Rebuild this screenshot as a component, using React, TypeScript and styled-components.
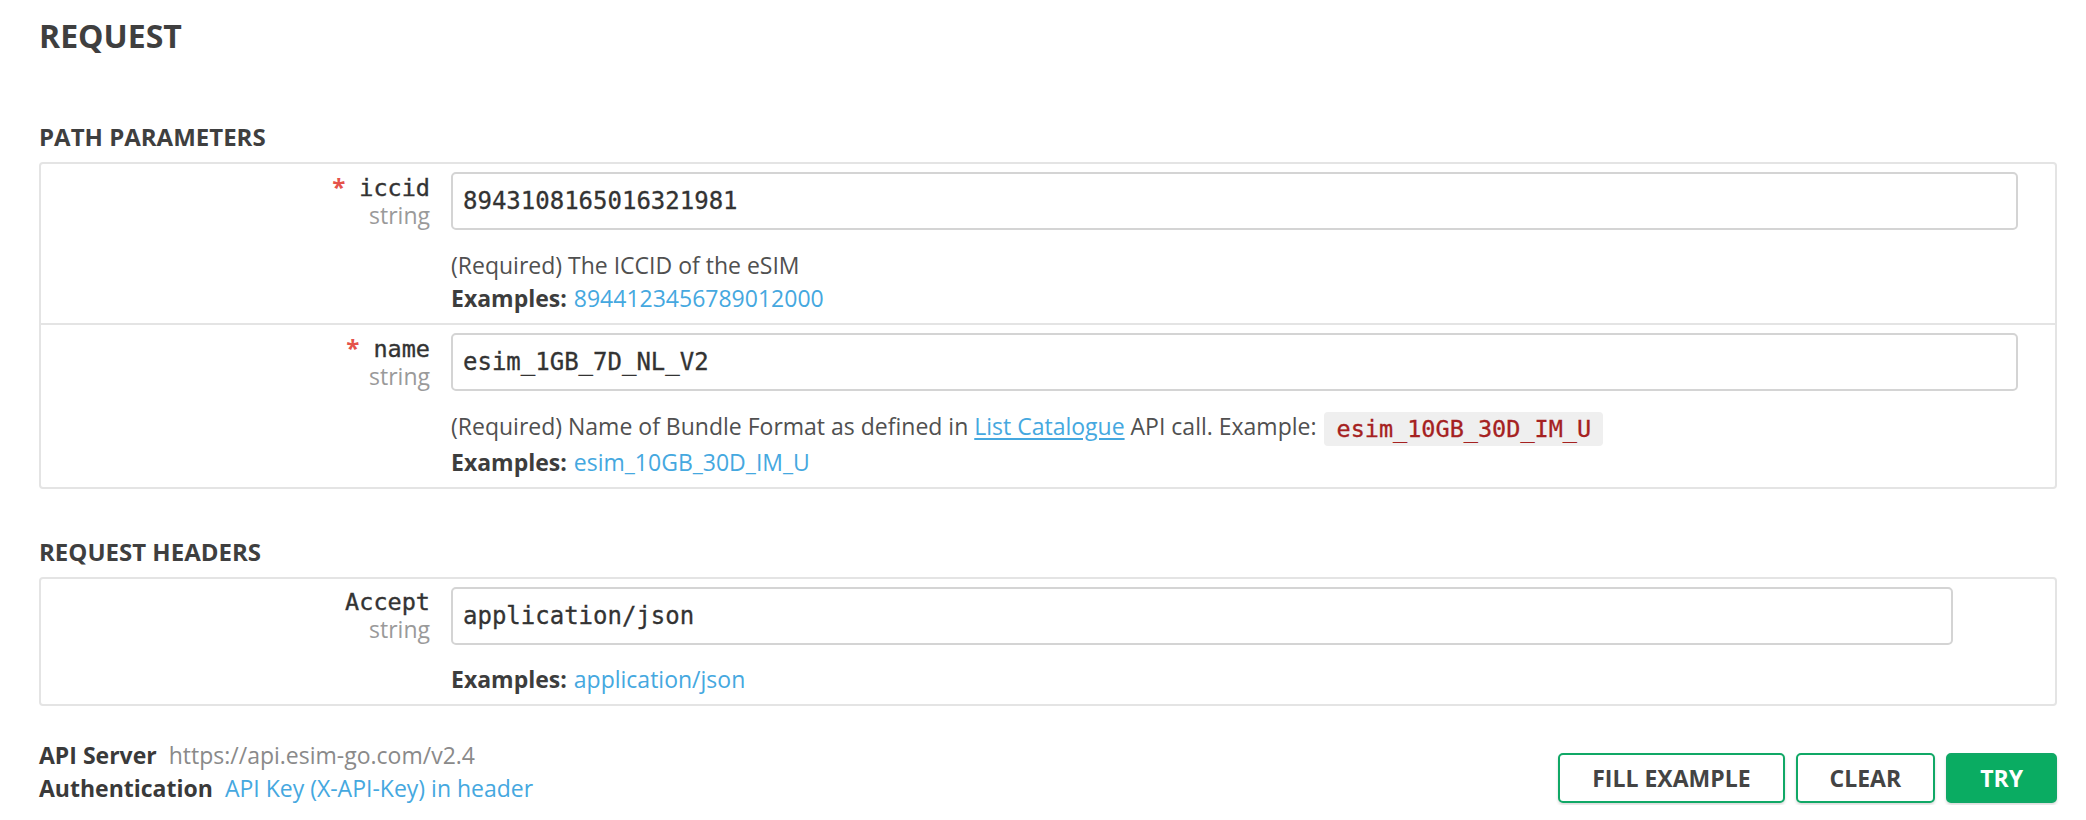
import React from 'react';
import styled, { createGlobalStyle } from 'styled-components';

const GlobalStyle = createGlobalStyle`
  html, body { margin: 0; padding: 0; background: #ffffff; }
  body { font-family: "Open Sans", "Liberation Sans", sans-serif; color: #444444; }
  * { box-sizing: border-box; }
`;

const MONO = `"DejaVu Sans Mono", "Liberation Mono", monospace`;

const Page = styled.div`
  padding: 12px 29px 0 39px;
`;

const Title = styled.h1`
  margin: 0;
  font-size: 32px;
  line-height: 48px;
  font-weight: 700;
  color: #3f3f3f;
`;

const SectionTitle = styled.h2<{ $gap: number }>`
  margin: ${(p) => p.$gap}px 0 7px;
  font-size: 24px;
  line-height: 36px;
  font-weight: 700;
  color: #3f3f3f;
`;

const Card = styled.div`
  border: 2px solid #e4e4e4;
  border-radius: 4px;
`;

const Row = styled.div`
  display: grid;
  grid-template-columns: 389px 1fr;
  column-gap: 21px;
  padding: 8px 37px 8px 0;
  & + & {
    border-top: 2px solid #e4e4e4;
  }
`;

const LabelCol = styled.div`
  text-align: right;
  padding-top: 1px;
`;

const NameLine = styled.div`
  font-family: ${MONO};
  font-size: 23.5px;
  line-height: 28px;
  color: #333333;
  white-space: nowrap;
  -webkit-text-stroke: 0.35px currentColor;
`;

const Required = styled.span`
  font-family: "Open Sans", sans-serif;
  font-weight: 700;
  font-size: 24px;
  color: #e5534b;
  margin-right: 14px;
  -webkit-text-stroke: 0;
`;

const TypeLine = styled.div`
  font-size: 23px;
  line-height: 27px;
  color: #9a9a9a;
`;

const ValueCol = styled.div`
  min-width: 0;
`;

const Input = styled.input<{ $narrow?: boolean }>`
  display: block;
  width: ${(p) => (p.$narrow ? '1502px' : '100%')};
  height: 58px;
  margin: 0 0 ${(p) => (p.$narrow ? '18px' : '19px')};
  padding: 0 10px;
  border: 2px solid #d4d4d4;
  border-radius: 5px;
  background: #ffffff;
  font-family: ${MONO};
  font-size: 24px;
  color: #333333;
  outline: none;
  -webkit-text-stroke: 0.3px currentColor;
`;

const TextLine = styled.div`
  font-size: 23px;
  line-height: 33px;
  color: #505050;
  white-space: nowrap;
`;

const Strong = styled.strong`
  font-weight: 700;
  color: #3d3d3d;
  margin-right: 7px;
`;

const Link = styled.a<{ $underline?: boolean }>`
  color: #45a8df;
  text-decoration: ${(p) => (p.$underline ? 'underline' : 'none')};
  text-underline-offset: 3px;
  cursor: pointer;
`;

const Code = styled.code`
  display: inline-block;
  margin-left: 2px;
  padding: 0 12px;
  height: 34px;
  line-height: 34px;
  vertical-align: middle;
  border-radius: 4px;
  background: #efefef;
  font-family: ${MONO};
  font-size: 23.5px;
  color: #a52121;
  -webkit-text-stroke: 0.3px currentColor;
`;

const Footer = styled.div`
  display: flex;
  justify-content: space-between;
  align-items: flex-end;
  margin-top: 33px;
`;

const Meta = styled.div`
  display: flex;
  flex-direction: column;
`;

const MetaLine = styled.div`
  font-size: 23px;
  line-height: 33px;
  white-space: nowrap;
`;

const MetaKey = styled.span`
  font-weight: 700;
  color: #3a3a3a;
  margin-right: 12px;
`;

const MetaValue = styled.span`
  color: #8a8a8a;
`;

const Actions = styled.div`
  display: flex;
  gap: 11px;
  margin-bottom: 2px;
`;

const Button = styled.button<{ $primary?: boolean }>`
  height: 50px;
  padding: 0 32px;
  border: 2px solid #10a866;
  border-radius: 5px;
  background: ${(p) => (p.$primary ? '#0aac62' : '#ffffff')};
  color: ${(p) => (p.$primary ? '#ffffff' : '#444444')};
  font-family: "Open Sans", sans-serif;
  font-size: 23px;
  font-weight: 700;
  text-transform: uppercase;
  box-shadow: 0 2px 3px rgba(0, 0, 0, 0.15);
  cursor: pointer;
`;

type FieldProps = {
  name: string;
  type: string;
  value: string;
  required?: boolean;
  narrow?: boolean;
  description?: React.ReactNode;
  example: string;
};

function Field({ name, type, value, required, narrow, description, example }: FieldProps) {
  return (
    <Row>
      <LabelCol>
        <NameLine>
          {required && <Required>*</Required>}
          {name}
        </NameLine>
        <TypeLine>{type}</TypeLine>
      </LabelCol>
      <ValueCol>
        <Input readOnly value={value} $narrow={narrow} />
        {description && <TextLine>{description}</TextLine>}
        <TextLine>
          <Strong>Examples:</Strong>
          <Link>{example}</Link>
        </TextLine>
      </ValueCol>
    </Row>
  );
}

export default function App() {
  return (
    <>
      <GlobalStyle />
      <Page>
        <Title>REQUEST</Title>

        <SectionTitle $gap={59}>PATH PARAMETERS</SectionTitle>
        <Card>
          <Field
            required
            name="iccid"
            type="string"
            value="8943108165016321981"
            description="(Required) The ICCID of the eSIM"
            example="8944123456789012000"
          />
          <Field
            required
            name="name"
            type="string"
            value="esim_1GB_7D_NL_V2"
            description={
              <>
                (Required) Name of Bundle Format as defined in <Link $underline>List Catalogue</Link> API call. Example:{' '}
                <Code>esim_10GB_30D_IM_U</Code>
              </>
            }
            example="esim_10GB_30D_IM_U"
          />
        </Card>

        <SectionTitle $gap={45}>REQUEST HEADERS</SectionTitle>
        <Card>
          <Field name="Accept" type="string" value="application/json" narrow example="application/json" />
        </Card>

        <Footer>
          <Meta>
            <MetaLine>
              <MetaKey>API Server</MetaKey>
              <MetaValue>https://api.esim-go.com/v2.4</MetaValue>
            </MetaLine>
            <MetaLine>
              <MetaKey>Authentication</MetaKey>
              <Link>API Key (X-API-Key) in header</Link>
            </MetaLine>
          </Meta>
          <Actions>
            <Button>Fill Example</Button>
            <Button>Clear</Button>
            <Button $primary>Try</Button>
          </Actions>
        </Footer>
      </Page>
    </>
  );
}
